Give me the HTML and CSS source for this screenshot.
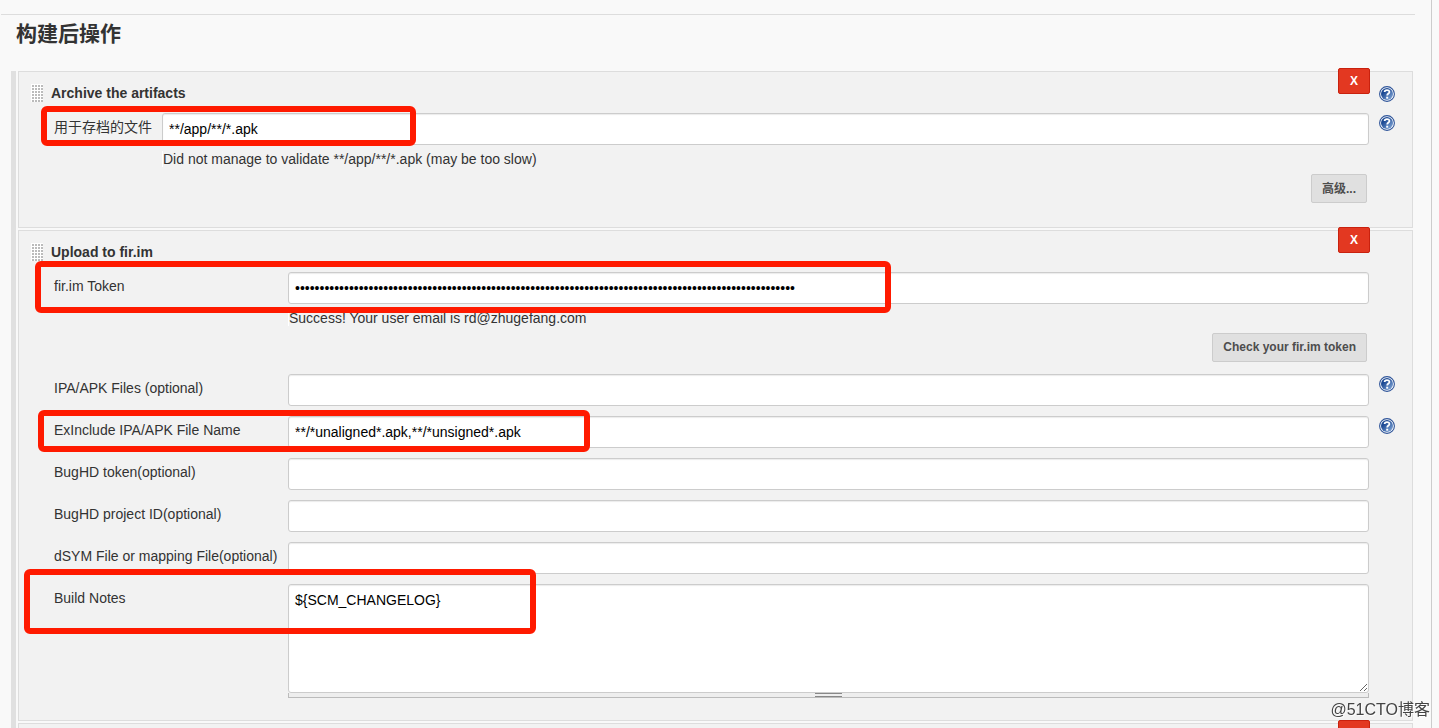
FILE: index.html
```html
<!DOCTYPE html>
<html lang="zh-CN">
<head>
    <meta charset="UTF-8">
    <meta name="viewport" content="width=device-width, initial-scale=1.0">
    <title>构建后操作</title>
    <link rel="stylesheet" href="styles.css">
</head>
<body>
    <svg class="icon-defs" width="0" height="0" aria-hidden="true">
        <defs>
            <linearGradient id="help-fill" x1="0" y1="0" x2="1" y2="1">
                <stop offset="0.3" stop-color="#1d4a94"/>
                <stop offset="1" stop-color="#8fb2e0"/>
            </linearGradient>
            <symbol id="help-icon" viewBox="0 0 16 16">
                <circle cx="8" cy="8" r="7.4" fill="#fff" stroke="#2e5499" stroke-width="1.1"/>
                <circle cx="8" cy="8" r="6" fill="url(#help-fill)"/>
                <path d="M5.6 6.1C5.6 3.4 10.4 3.4 10.4 5.9C10.4 7.6 8.2 7.4 8.2 9.6" fill="none" stroke="#fff" stroke-width="1.8"/>
                <rect x="7.2" y="10.7" width="2" height="2" fill="#fff"/>
            </symbol>
        </defs>
    </svg>

    <main class="page">
        <h1>构建后操作</h1>
        <form class="steps">
            <section class="step step-archive">
                <button class="delete" type="button">X</button>
                <div class="step-header">
                    <span class="drag-handle"></span>
                    <h2>Archive the artifacts</h2>
                    <a class="help" href="#" aria-label="Help"><svg><use href="#help-icon"/></svg></a>
                </div>
                <div class="row">
                    <label for="artifacts">用于存档的文件</label>
                    <input type="text" id="artifacts" value="**/app/**/*.apk">
                    <a class="help" href="#" aria-label="Help"><svg><use href="#help-icon"/></svg></a>
                    <span class="mark mark-artifacts"></span>
                </div>
                <p class="message">Did not manage to validate **/app/**/*.apk (may be too slow)</p>
                <div class="actions">
                    <button class="button" type="button">高级...</button>
                </div>
            </section>

            <section class="step step-upload">
                <button class="delete" type="button">X</button>
                <div class="step-header">
                    <span class="drag-handle"></span>
                    <h2>Upload to fir.im</h2>
                </div>
                <div class="row">
                    <label for="token">fir.im Token</label>
                    <input type="password" id="token" value="000000000000000000000000000000000000000000000000000000000000000000000000000000000000000000000000000000">
                    <span class="mark mark-token"></span>
                </div>
                <p class="message">Success! Your user email is rd@zhugefang.com</p>
                <div class="actions">
                    <button class="button" type="button">Check your fir.im token</button>
                </div>
                <div class="row">
                    <label for="files">IPA/APK Files (optional)</label>
                    <input type="text" id="files">
                    <a class="help" href="#" aria-label="Help"><svg><use href="#help-icon"/></svg></a>
                </div>
                <div class="row">
                    <label for="exclude">ExInclude IPA/APK File Name</label>
                    <input type="text" id="exclude" value="**/*unaligned*.apk,**/*unsigned*.apk">
                    <a class="help" href="#" aria-label="Help"><svg><use href="#help-icon"/></svg></a>
                    <span class="mark mark-exclude"></span>
                </div>
                <div class="row">
                    <label for="bughd-token">BugHD token(optional)</label>
                    <input type="text" id="bughd-token">
                </div>
                <div class="row">
                    <label for="bughd-project">BugHD project ID(optional)</label>
                    <input type="text" id="bughd-project">
                </div>
                <div class="row">
                    <label for="dsym">dSYM File or mapping File(optional)</label>
                    <input type="text" id="dsym">
                </div>
                <div class="row">
                    <label for="notes">Build Notes</label>
                    <div class="notes">
                        <textarea id="notes" spellcheck="false">${SCM_CHANGELOG}</textarea>
                        <div class="resizer"><span></span></div>
                    </div>
                    <span class="mark mark-notes"></span>
                </div>
            </section>

            <section class="step">
                <button class="delete" type="button" aria-label="Delete"></button>
                <div class="step-header"></div>
            </section>
        </form>
    </main>
    <div class="watermark">@51CTO博客</div>
</body>
</html>
```
FILE: styles.css
```css
* {
    box-sizing: border-box;
}

body {
    margin: 0;
    background-color: #f9f9f9;
    color: #333;
    font-family: "Liberation Sans", "Noto Sans CJK SC", sans-serif;
    font-size: 14px;
    line-height: 16px;
}

.icon-defs {
    position: absolute;
}

.page {
    height: 100vh;
    margin-right: 7px;
    padding: 14px 16px 0 1px;
    border-right: 1px solid #ccc;
    overflow: hidden;
}

h1 {
    margin: 0;
    padding: 3px 15px 22px;
    border-top: 1px solid #ddd;
    font-size: 21px;
    font-weight: 600;
    line-height: 31px;
}

/* Steps */
.steps {
    display: flex;
    flex-direction: column;
    gap: 2px;
    min-height: 100%;
    margin: 0 2px 0 10px;
    padding-left: 2px;
    border-left: 5px solid #e0e0e0;
}

.step {
    --label-width: 234px;
    position: relative;
    padding: 0 0 12px 35px;
    border: 1px solid #ddd;
    background-color: #f2f2f2;
}

.step-archive {
    --label-width: 108px;
}

.step-header {
    display: grid;
    grid-template-columns: 20px 1fr 43px;
    height: 41px;
    margin-left: -23px;
    padding-top: 12px;
}

.step-header h2 {
    margin: 0;
    font-size: 14px;
    line-height: 18px;
}

.drag-handle {
    width: 12px;
    height: 18px;
    background-color: #fff;
    background-image: radial-gradient(circle at 2px 2px, #bbb 1px, transparent 1px);
    background-size: 3px 3px;
}

/* Rows */
.row {
    display: grid;
    grid-template-columns: var(--label-width) 1fr 43px;
    align-items: start;
    position: relative;
    margin-bottom: 10px;
}

.row label {
    line-height: 28px;
    white-space: nowrap;
}

.row input,
.row textarea {
    display: block;
    width: 100%;
    margin: 0;
    padding: 0 6px;
    border: 1px solid #ccc;
    border-radius: 3px;
    background-color: #fff;
    box-shadow: inset 0 1px 1px rgba(0, 0, 0, 0.08);
    color: #000;
    font-family: inherit;
    font-size: 14px;
}

.row input {
    height: 32px;
}

.row textarea {
    height: 109px;
    padding-top: 6px;
    line-height: 18px;
    resize: vertical;
}

.help {
    height: 16px;
    margin: 2px 0 0 10px;
}

.help svg {
    display: block;
    width: 16px;
    height: 16px;
}

.resizer {
    height: 5px;
    border: 1px solid #bbb;
    border-top: none;
    background-color: #eee;
}

.resizer span {
    display: block;
    width: 27px;
    height: 4px;
    margin: 0 auto;
    border: solid #888;
    border-width: 1px 0;
}

.message {
    margin: -4px 43px 7px var(--label-width);
    border-left: 1px solid #fff;
}

/* Buttons */
.actions {
    display: flex;
    justify-content: flex-end;
    margin: 0 45px 12px 0;
}

.button {
    height: 29px;
    padding: 0 10px 2px;
    border: 1px solid #ccc;
    border-radius: 2px;
    background-color: #e0e0e0;
    color: #4d4d4d;
    font-family: inherit;
    font-size: 12px;
    font-weight: bold;
    cursor: pointer;
}

.delete {
    position: absolute;
    top: -4px;
    right: 42px;
    width: 32px;
    height: 26px;
    padding: 0;
    border: 1px solid #c9210e;
    border-radius: 2px;
    background-color: #e33821;
    color: #fff;
    font-family: inherit;
    font-size: 12px;
    font-weight: bold;
    cursor: pointer;
}

/* Red frames drawn over the important rows */
.mark {
    position: absolute;
    border: 6px solid #ff1a00;
    border-radius: 6px;
    pointer-events: none;
    z-index: 1;
}

.mark-artifacts {
    top: -7px;
    left: -13px;
    width: 375px;
    height: 40px;
}

.mark-token {
    top: -11px;
    left: -19px;
    width: 856px;
    height: 52px;
}

.mark-exclude {
    top: -6px;
    left: -16px;
    width: 552px;
    height: 42px;
}

.mark-notes {
    top: -15px;
    left: -30px;
    width: 512px;
    height: 65px;
}

.watermark {
    position: fixed;
    right: 9px;
    bottom: 6px;
    color: #444;
    font-size: 16px;
    line-height: 24px;
    text-shadow: 1px 1px 1px #fff;
    z-index: 2;
}
```
